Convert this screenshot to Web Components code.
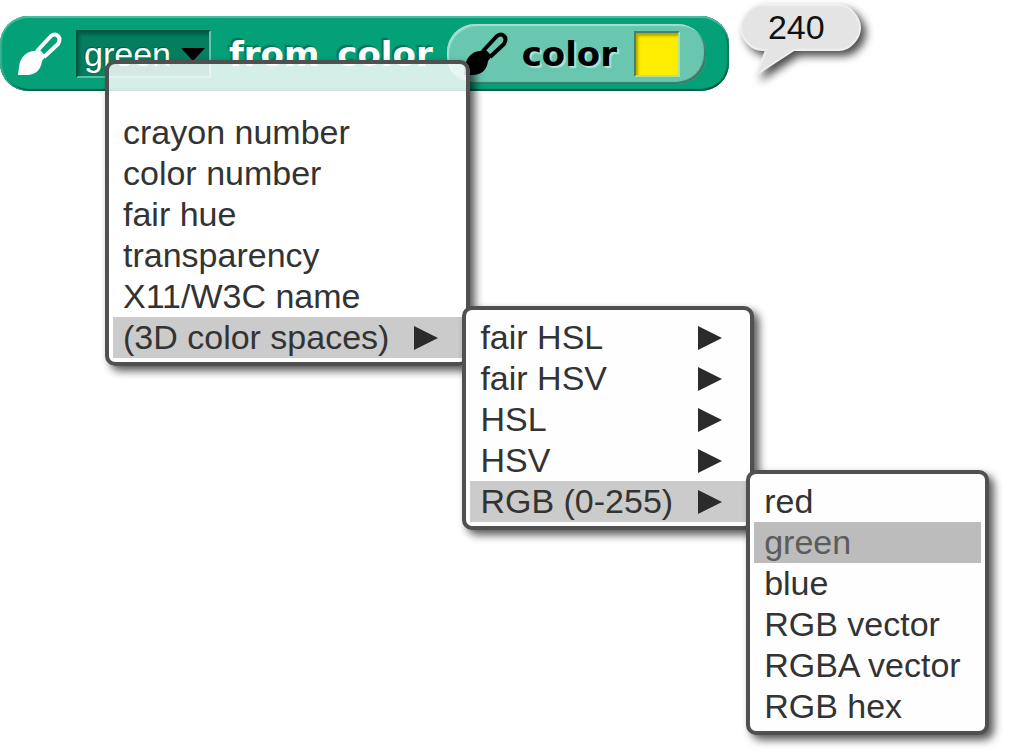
<!DOCTYPE html>
<html lang="en">
<head>
<meta charset="utf-8">
<title>Color block</title>
<style>
  body { margin: 0; background: #fff; color: #333; font-family: "Liberation Sans", Arial, sans-serif; font-size: 34px; line-height: 41px; }
</style>
</head>
<body>
<script-stage>
  <command-block>
    <brush-icon></brush-icon>
    <choice-field label="Color attribute" value="green">
      <pop-menu slot="menu">
        <menu-entry></menu-entry>
        <menu-entry>crayon number</menu-entry>
        <menu-entry>color number</menu-entry>
        <menu-entry>fair hue</menu-entry>
        <menu-entry>transparency</menu-entry>
        <menu-entry>X11/W3C name</menu-entry>
        <menu-entry parent open>(3D color spaces)
          <pop-menu slot="submenu">
            <menu-entry parent>fair HSL</menu-entry>
            <menu-entry parent>fair HSV</menu-entry>
            <menu-entry parent>HSL</menu-entry>
            <menu-entry parent>HSV</menu-entry>
            <menu-entry parent open>RGB (0-255)
              <pop-menu slot="submenu">
                <menu-entry>red</menu-entry>
                <menu-entry current>green</menu-entry>
                <menu-entry>blue</menu-entry>
                <menu-entry>RGB vector</menu-entry>
                <menu-entry>RGBA vector</menu-entry>
                <menu-entry>RGB hex</menu-entry>
              </pop-menu>
            </menu-entry>
          </pop-menu>
        </menu-entry>
      </pop-menu>
    </choice-field>
    <block-word>from</block-word>
    <block-word>color</block-word>
    <color-reporter></color-reporter>
  </command-block>
  <result-bubble>240</result-bubble>
</script-stage>

<script>
const define = (name, markup, setup) => customElements.define(name, class extends HTMLElement {
  connectedCallback() {
    if (this.shadowRoot) return;
    const root = this.attachShadow({ mode: "open" });
    root.innerHTML = markup;
    if (setup) setup(this, root);
  }
});

define("script-stage", `
  <style>
    :host { display: flex; align-items: flex-start; gap: 11px; box-sizing: border-box; min-height: 100vh; padding-top: 4px; }
  </style>
  <slot></slot>`);

define("command-block", `
  <style>
    :host {
      display: flex; align-items: center; flex: none; box-sizing: border-box;
      margin-top: 12px; padding: 8px 23px 7px 17px; gap: 18px;
      border-radius: 28px; background: #04a077; color: #fff;
      box-shadow: inset 0 2px 1px #4fbd9f, inset 2px 0 1px #35b08e, inset 0 -2px 1px #00553f, inset -2px 0 1px #007254;
      --word-shadow: -2px -2px 1px #037355;
    }
    ::slotted(brush-icon) { margin-right: -4px; }
    ::slotted(color-reporter) { margin-left: -4px; }
  </style>
  <slot></slot>`);

define("brush-icon", `
  <style>
    :host { display: block; flex: none; }
    svg { display: block; width: 45px; height: 45px; overflow: visible; }
  </style>
  <svg viewBox="0 0 45 45" aria-hidden="true">
    <path d="M20 19 L34 4 Q38 1 41 4 Q44 7 41 12 L27 25" fill="none" stroke="currentColor" stroke-width="4" stroke-linejoin="round"/>
    <path d="M1 43 C2 37 2 30 5 26 Q10 19 17 19 L22 17 L29 24 L25 29 C24 38 18 43 10 43 Z" fill="currentColor"/>
  </svg>`);

define("block-word", `
  <style>
    :host { display: block; font-family: "DejaVu Sans", Verdana, sans-serif; font-weight: bold; text-shadow: var(--word-shadow); }
  </style>
  <slot></slot>`);

define("choice-field", `
  <style>
    :host { display: block; position: relative; flex: none; }
    label { display: flex; align-items: center; box-sizing: border-box; background: #037f5f;
      border: 2px solid; border-color: #03553f #6bc5ae #5bbda4 #03553f;
      box-shadow: inset 2px 3px 3px #04604a; }
    select { appearance: none; border: 0; margin: 0; padding: 1px 41px 1px 6px; height: 44px; background: none;
      color: #fff; font: inherit; text-shadow: -1px -1px 1px #035a43; outline: 0; }
    svg { width: 24px; height: 13px; margin-left: -31px; margin-right: 4px; pointer-events: none; }
    ::slotted(pop-menu) { position: absolute; left: 29px; top: 30px; z-index: 1; }
  </style>
  <label>
    <select><option></option></select>
    <svg viewBox="0 0 24 13" aria-hidden="true"><path d="M0 0H24L12 13Z"/></svg>
  </label>
  <slot name="menu"></slot>`, (host, root) => {
    root.querySelector("select").setAttribute("aria-label", host.getAttribute("label"));
    root.querySelector("option").textContent = host.getAttribute("value");
  });

define("color-reporter", `
  <style>
    :host {
      display: flex; align-items: center; flex: none; box-sizing: border-box; height: 60px;
      padding: 0 26px 0 16px; border-radius: 28px; background: #69c7af; color: #000;
      box-shadow: inset 2px 2px 1px #a5ddcf, inset -2px -2px 1px #3f7869;
      --word-shadow: 2px 2px 1px #b5e5d9;
    }
    block-word { margin: 0 17px 0 14px; }
    input { appearance: none; box-sizing: border-box; width: 46px; height: 46px; margin: 0; padding: 0;
      background: #ffee00; border: 2px solid; border-color: #46826c #b3df9c #b3df9c #46826c;
      box-shadow: inset 2px 3px 3px #b3a600; }
    input::-webkit-color-swatch-wrapper { padding: 0; }
    input::-webkit-color-swatch { border: 0; opacity: 0; }
  </style>
  <brush-icon></brush-icon>
  <block-word>color</block-word>
  <input type="color" value="#ffee00" aria-label="color">`);

define("pop-menu", `
  <style>
    :host { display: block; box-sizing: border-box; width: max-content; padding: 7px 4px 4px;
      border: 4px solid #505050; border-radius: 10px; background: rgba(255, 255, 255, .83);
      box-shadow: 5px 5px 8px rgba(0, 0, 0, .65); }
    :host([slot="submenu"]) { background: #fefefe; }
  </style>
  <div role="menu"><slot></slot></div>`);

define("menu-entry", `
  <style>
    :host { display: block; position: relative; color: #333; }
    button { display: flex; align-items: center; gap: 25px; box-sizing: border-box; width: 100%; height: 41px;
      margin: 0; padding: 0 20px 0 10px; border: 0; background: none; color: inherit; font: inherit;
      text-align: left; white-space: nowrap; }
    svg { display: none; width: 24px; height: 24px; margin-left: auto; }
    :host([parent]) button { padding-right: 24px; }
    :host([parent]) svg { display: block; }
    :host([open]) button { background: #cbcbcb; }
    :host([current]) button { background: #bcbcbc; color: #5c5c5c; }
    ::slotted(pop-menu) { position: absolute; left: 100%; top: -11px; z-index: 1; }
  </style>
  <button type="button" role="menuitem"><slot></slot><svg viewBox="0 0 24 24" aria-hidden="true"><path d="M0 0L24 12L0 24Z" fill="#2b2b2b"/></svg></button>
  <slot name="submenu"></slot>`);

define("result-bubble", `
  <style>
    :host { display: block; position: relative; flex: none; box-sizing: border-box;
      padding: 3px 37px 3px 28px; color: #111; }
    svg { position: absolute; left: 0; top: 0; width: 121px; height: 72px; overflow: visible;
      filter: drop-shadow(5px 5px 4px rgba(0, 0, 0, .7)); }
    output { position: relative; }
  </style>
  <svg viewBox="0 0 121 72" aria-hidden="true">
    <path d="M22 1H99C110 1 120 14 120 24S110 46 99 46H54L17 70L26 46H22C11 46 1 34 1 24S11 1 22 1Z" fill="#e4e4e4" stroke="#efefef" stroke-width="2"/>
  </svg>
  <output><slot></slot></output>`);
</script>
</body>
</html>
